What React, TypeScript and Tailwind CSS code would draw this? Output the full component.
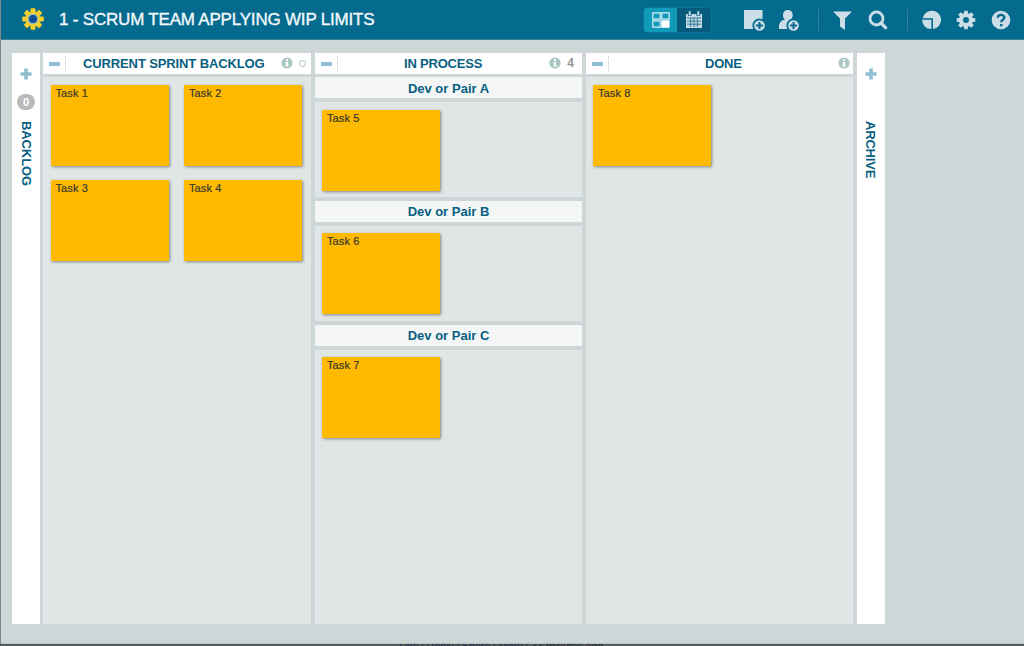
import React from "react";

function Header() {
  return (
    <header className="flex h-[40px] shrink-0 items-center border-b border-[#3d8296] bg-[#046a8e] text-[#cbdde6]">
      <svg className="ml-[20px] -mt-px shrink-0" width="24" height="24" viewBox="-12 -12 24 24">
        <g fill="#f5cf2f">
          {[0, 45, 90, 135, 180, 225, 270, 315].map((a) => (
            <rect key={a} x="-2.5" y="-10.8" width="5" height="5" rx="1" transform={`rotate(${a})`} />
          ))}
        </g>
        <circle r="6.2" fill="#0b5a94" stroke="#f5cf2f" strokeWidth="2.2" />
        <circle r="4.6" fill="#0d4e94" stroke="#8fc0c0" strokeWidth="1.2" />
      </svg>
      <h1 className="ml-[14px] w-[330px] shrink-0 whitespace-nowrap text-[17px] leading-[20px] tracking-[-0.2px] text-[#f2f8fa] [-webkit-text-stroke:0.35px_#f2f8fa]">
        1 - SCRUM TEAM APPLYING WIP LIMITS
      </h1>
      <div className="ml-[254px] flex h-[26px] w-[69px] shrink-0 overflow-hidden rounded-[4px] border border-[#07759a] bg-[#075b7d]">
        <div className="flex w-[33px] items-center justify-center bg-[#109ab8]">
          <svg width="18" height="16" viewBox="0 0 18 16">
            <path d="M.8.8h7.4v6.4H.8zM9.8.8h7.4v6.4H9.8zM.8 8.8h7.4v6.4H.8z" fill="none" stroke="#d9f0f5" strokeWidth="1.2" />
            <path d="M9.3 8.3h8.2v7.4H9.3z" fill="#fff" />
          </svg>
        </div>
        <div className="flex flex-1 items-center justify-center">
          <svg width="18" height="18" viewBox="0 0 18 18">
            <path d="M1 3h16v14H1z" fill="#c3dbe5" />
            <path d="M2 7h14M5.6 7v9M9 7v9M12.4 7v9M2 10.2h14M2 13.2h14" stroke="#075b7d" strokeWidth="1" opacity=".75" />
            <path d="M4.7 1v4M13.3 1v4" stroke="#075b7d" strokeWidth="3.6" />
            <path d="M4.7 .3v4.200M13.3 .3v4.200" stroke="#c3dbe5" strokeWidth="2" />
          </svg>
        </div>
      </div>
      <svg className="ml-[31px] shrink-0" width="24" height="24" viewBox="0 0 24 24">
        <path d="M1 2h18.500v19H1z" fill="#cbdde6" />
        <circle cx="16.5" cy="17.5" r="6.2" fill="#cbdde6" stroke="#046a8e" strokeWidth="1.8" />
        <path d="M16.5 14v7M13 17.5h7" stroke="#046a8e" strokeWidth="2" />
      </svg>
      <svg className="ml-[11px] mr-px shrink-0" width="24" height="24" viewBox="0 0 24 24">
        <path d="M10 2a4.7 4.7 0 0 1 4.7 5c0 2-.9 3.600-2 4.500 3 .5 5.300 2.500 5.800 6V21H1v-3.500c.5-3.500 2.500-5.500 6-6-1.400-1-2-2.500-2-4.500a4.700 4.700 0 0 1 5-5z" fill="#cbdde6" />
        <circle cx="15.500" cy="17.500" r="6.200" fill="#cbdde6" stroke="#046a8e" strokeWidth="1.800" />
        <path d="M15.500 14v7M12 17.500h7" stroke="#046a8e" strokeWidth="2" />
      </svg>
      <div className="ml-[15px] h-[22px] w-px shrink-0 bg-[#347f9b]" />
      <svg className="ml-[14px] mt-px shrink-0" width="20" height="20" viewBox="0 0 20 20">
        <path d="M0 1.500h19l-7 7V20l-5-3.600V8.500z" fill="#cbdde6" />
      </svg>
      <svg className="ml-[15px] mt-px shrink-0" width="20" height="20" viewBox="0 0 20 20">
        <circle cx="8.500" cy="8.500" r="6.500" fill="none" stroke="#cbdde6" strokeWidth="2.800" />
        <path d="M13 13l4.600 4.600" stroke="#cbdde6" strokeWidth="3.400" strokeLinecap="round" />
      </svg>
      <div className="ml-[19px] h-[22px] w-px shrink-0 bg-[#347f9b]" />
      <svg className="ml-[13px] mt-px shrink-0" width="20" height="20" viewBox="0 0 20 20">
        <path d="M1.800 8.200A9.200 9.200 0 1 1 12 19V8.200z" fill="#cbdde6" />
        <path d="M1 9.800H10.400V19A9.200 9.200 0 0 1 1 9.800z" fill="#cbdde6" />
      </svg>
      <svg className="ml-[15px] mt-px shrink-0" width="20" height="20" viewBox="-10 -10 20 20">
        <g fill="#cbdde6">
          {[0, 45, 90, 135, 180, 225, 270, 315].map((a) => (
            <path key={a} d="M-2.200-5.500l.5-3.800h3.400l.5 3.800z" transform={`rotate(${a})`} />
          ))}
        </g>
        <circle r="5" fill="none" stroke="#cbdde6" strokeWidth="4" />
      </svg>
      <svg className="ml-[15px] mt-px shrink-0" width="20" height="20" viewBox="0 0 20 20">
        <circle cx="10" cy="10" r="9.300" fill="#cbdde6" />
        <path d="M6.800 7.800c0-3.800 6.600-3.800 6.600-.2 0 2.200-3.200 2.200-3.200 4.600" fill="none" stroke="#046a8e" strokeWidth="2.300" />
        <path d="M9 14h2.500v2.300H9z" fill="#046a8e" />
      </svg>
    </header>
  );
}

function Info() {
  return (
    <svg className="-mt-[2px] shrink-0" width="12" height="12" viewBox="0 0 12 12">
      <circle cx="6" cy="6" r="5.600" fill="#aac7c4" />
      <path d="M5 2.200h2v1.700H5zM4.300 4.900H7v3.400h.8v1.300H4.300V8.300h.8V6.200h-.8z" fill="#fff" />
    </svg>
  );
}

function ColumnHeader({ title, titleClass, children }: { title: string; titleClass: string; children?: React.ReactNode }) {
  return (
    <div className="mb-[3px] flex h-[21px] shrink-0 items-center bg-white text-[#075f82]">
      <div className="ml-[6px] h-[4px] w-[11px] shrink-0 bg-[#8fbfd3]" />
      <div className="ml-[5px] h-[16px] shrink-0 border-l border-dotted border-[#c9cdce]" />
      <h2 className={`shrink-0 whitespace-nowrap text-[13px] font-bold leading-[20px] ${titleClass}`}>{title}</h2>
      <div className="ml-auto flex items-center">{children}</div>
    </div>
  );
}

function Card({ name }: { name: string }) {
  return (
    <article className="h-[81px] w-[118px] shrink-0 rounded-[1px] bg-[#ffba00] pl-[5px] pt-[2px] text-[11px] leading-[13px] tracking-[0.1px] text-[#38382c] shadow-[1px_1px_3px_rgba(60,70,70,0.6)] [-webkit-text-stroke:0.2px_#38382c]">
      {name}
    </article>
  );
}

function Lane({ title, task, titleClass, bodyClass }: { title: string; task: string; titleClass: string; bodyClass: string }) {
  return (
    <>
      <h3 className={`mb-[4px] h-[21px] shrink-0 bg-[#f4f6f6] text-center text-[13px] font-bold text-[#075f82] ${titleClass}`}>
        {title}
      </h3>
      <div className={`bg-[#e0e6e5] pl-[7px] ${bodyClass}`}>
        <Card name={task} />
      </div>
    </>
  );
}

function Plus() {
  return (
    <svg width="12" height="12" viewBox="0 0 12 12">
      <path d="M6 .5v11M.5 6h11" stroke="#8fbfd3" strokeWidth="3.600" />
    </svg>
  );
}

export default function App() {
  return (
    <div className="flex h-[646px] w-[1024px] flex-col overflow-hidden bg-[#555a5a] font-['Liberation_Sans',Arial,sans-serif]">
      <div className="flex h-[644px] shrink-0">
        <div className="w-px shrink-0 bg-[#88868b]" />
        <div className="flex min-w-0 flex-1 flex-col border-b border-[#b5c4c4] bg-[#ced7d8]">
          <Header />
          <main className="flex h-[584px] shrink-0 pl-[11px] pt-[13px]">
            <section className="flex w-[28px] shrink-0 flex-col items-center bg-white">
              <div className="mt-[15px]">
                <Plus />
              </div>
              <span className="mt-[14px] h-[16px] w-[18px] rounded-full bg-[#bababa] text-center text-[11px] font-bold leading-[16px] text-white">0</span>
              <h2 className="mt-[11px] text-[13px] font-bold leading-[16px] tracking-[-0.1px] text-[#075f82] [writing-mode:vertical-rl]">BACKLOG</h2>
            </section>
            <section className="ml-[3px] flex w-[268px] shrink-0 flex-col">
              <ColumnHeader title="CURRENT SPRINT BACKLOG" titleClass="ml-[17px] tracking-[-0.12px]">
                <Info />
                <span className="ml-[6px] mr-[5px] h-[7px] w-[7px] rounded-full border border-[#a5c3c3]" />
              </ColumnHeader>
              <div className="flex flex-1 flex-wrap content-start gap-x-[15.5px] gap-y-[14px] bg-[#e0e6e5] pl-[7.5px] pt-[8px]">
                <Card name="Task 1" />
                <Card name="Task 2" />
                <Card name="Task 3" />
                <Card name="Task 4" />
              </div>
            </section>
            <section className="ml-[4px] flex w-[267px] shrink-0 flex-col">
              <ColumnHeader title="IN PROCESS" titleClass="ml-[66px] tracking-[-0.2px]">
                <Info />
                <span className="-mt-[2px] ml-[6px] mr-[8px] text-[12px] font-bold leading-[16px] text-[#929696]">4</span>
              </ColumnHeader>
              <Lane title="Dev or Pair A" task="Task 5" titleClass="leading-[23px]" bodyClass="mb-[4px] h-[95px] pt-[7.5px]" />
              <Lane title="Dev or Pair B" task="Task 6" titleClass="leading-[22px]" bodyClass="mb-[4px] h-[95px] pt-[7px]" />
              <Lane title="Dev or Pair C" task="Task 7" titleClass="leading-[22px]" bodyClass="flex-1 pt-[7px]" />
            </section>
            <section className="ml-[4px] flex w-[267px] shrink-0 flex-col">
              <ColumnHeader title="DONE" titleClass="ml-[96px] tracking-[-0.2px]">
                <div className="mr-[3px]">
                  <Info />
                </div>
              </ColumnHeader>
              <div className="flex-1 bg-[#e0e6e5] pl-[7px] pt-[8px]">
                <Card name="Task 8" />
              </div>
            </section>
            <section className="ml-[4px] flex w-[28px] shrink-0 flex-col items-center bg-white">
              <div className="mt-[15px]">
                <Plus />
              </div>
              <h2 className="mr-[2px] mt-[41px] text-[13px] font-bold leading-[16px] tracking-[-0.2px] text-[#075f82] [writing-mode:vertical-rl]">ARCHIVE</h2>
            </section>
          </main>
        </div>
      </div>
      <footer className="h-[2px] overflow-hidden pl-[399px]">
        <p className="-mt-[4px] whitespace-nowrap text-[11px] leading-[12px] tracking-[-0.22px] text-[#292d30]">
          <span className="text-[#1d2c49]">Like | Reply | Share | More</span> | 33 minutes ago
        </p>
      </footer>
    </div>
  );
}
